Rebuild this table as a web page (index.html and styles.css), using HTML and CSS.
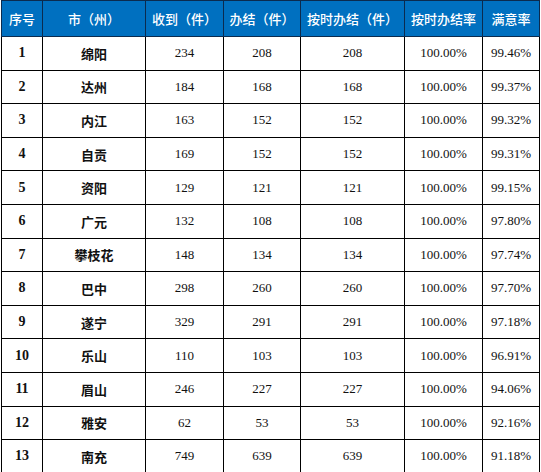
FILE: index.html
```html
<!DOCTYPE html>
<html lang="zh">
<head>
<meta charset="utf-8">
<link rel="stylesheet" href="styles.css">
</head>
<body>
<table class="tbl">
  <colgroup>
    <col class="c1"><col class="c2"><col class="c3"><col class="c4"><col class="c5"><col class="c6"><col class="c7">
  </colgroup>
  <thead>
    <tr><th>序号</th><th>市（州）</th><th>收到（件）</th><th>办结（件）</th><th>按时办结（件）</th><th>按时办结率</th><th>满意率</th></tr>
  </thead>
  <tbody>
    <tr><td class="no">1</td><td class="city">绵阳</td><td>234</td><td>208</td><td>208</td><td>100.00%</td><td>99.46%</td></tr>
    <tr><td class="no">2</td><td class="city">达州</td><td>184</td><td>168</td><td>168</td><td>100.00%</td><td>99.37%</td></tr>
    <tr><td class="no">3</td><td class="city">内江</td><td>163</td><td>152</td><td>152</td><td>100.00%</td><td>99.32%</td></tr>
    <tr><td class="no">4</td><td class="city">自贡</td><td>169</td><td>152</td><td>152</td><td>100.00%</td><td>99.31%</td></tr>
    <tr><td class="no">5</td><td class="city">资阳</td><td>129</td><td>121</td><td>121</td><td>100.00%</td><td>99.15%</td></tr>
    <tr><td class="no">6</td><td class="city">广元</td><td>132</td><td>108</td><td>108</td><td>100.00%</td><td>97.80%</td></tr>
    <tr><td class="no">7</td><td class="city">攀枝花</td><td>148</td><td>134</td><td>134</td><td>100.00%</td><td>97.74%</td></tr>
    <tr><td class="no">8</td><td class="city">巴中</td><td>298</td><td>260</td><td>260</td><td>100.00%</td><td>97.70%</td></tr>
    <tr><td class="no">9</td><td class="city">遂宁</td><td>329</td><td>291</td><td>291</td><td>100.00%</td><td>97.18%</td></tr>
    <tr><td class="no">10</td><td class="city">乐山</td><td>110</td><td>103</td><td>103</td><td>100.00%</td><td>96.91%</td></tr>
    <tr><td class="no">11</td><td class="city">眉山</td><td>246</td><td>227</td><td>227</td><td>100.00%</td><td>94.06%</td></tr>
    <tr><td class="no">12</td><td class="city">雅安</td><td>62</td><td>53</td><td>53</td><td>100.00%</td><td>92.16%</td></tr>
    <tr><td class="no">13</td><td class="city">南充</td><td>749</td><td>639</td><td>639</td><td>100.00%</td><td>91.18%</td></tr>
  </tbody>
</table>
</body>
</html>
```
FILE: styles.css
```css
html, body {
  margin: 0;
  padding: 0;
  background: #ffffff;
}
.tbl {
  margin: 0 0 0 1px;
  border-collapse: collapse;
  table-layout: fixed;
  width: 539px;
  font-family: "Liberation Serif", "Noto Sans CJK SC", serif;
  font-size: 13px;
  color: #111;
}
.c1 { width: 41px; }
.c2 { width: 103px; }
.c3 { width: 78px; }
.c4 { width: 77px; }
.c5 { width: 104px; }
.c6 { width: 78px; }
.c7 { width: 57px; }
.tbl th, .tbl td {
  border: 1px solid #000;
  text-align: center;
  vertical-align: middle;
  padding: 0;
}
.tbl th {
  background: #0070c0;
  color: #fff;
  font-family: "Noto Sans CJK SC", sans-serif;
  font-weight: 500;
  font-size: 13px;
  height: 35px;
  border-color: #0b2b4f;
}
.tbl td {
  height: 32.6px;
}
.tbl td.no {
  font-weight: bold;
  font-size: 14px;
  font-family: "Liberation Serif", serif;
}
.tbl td.city {
  font-family: "Noto Sans CJK SC", sans-serif;
  font-weight: bold;
}
```
